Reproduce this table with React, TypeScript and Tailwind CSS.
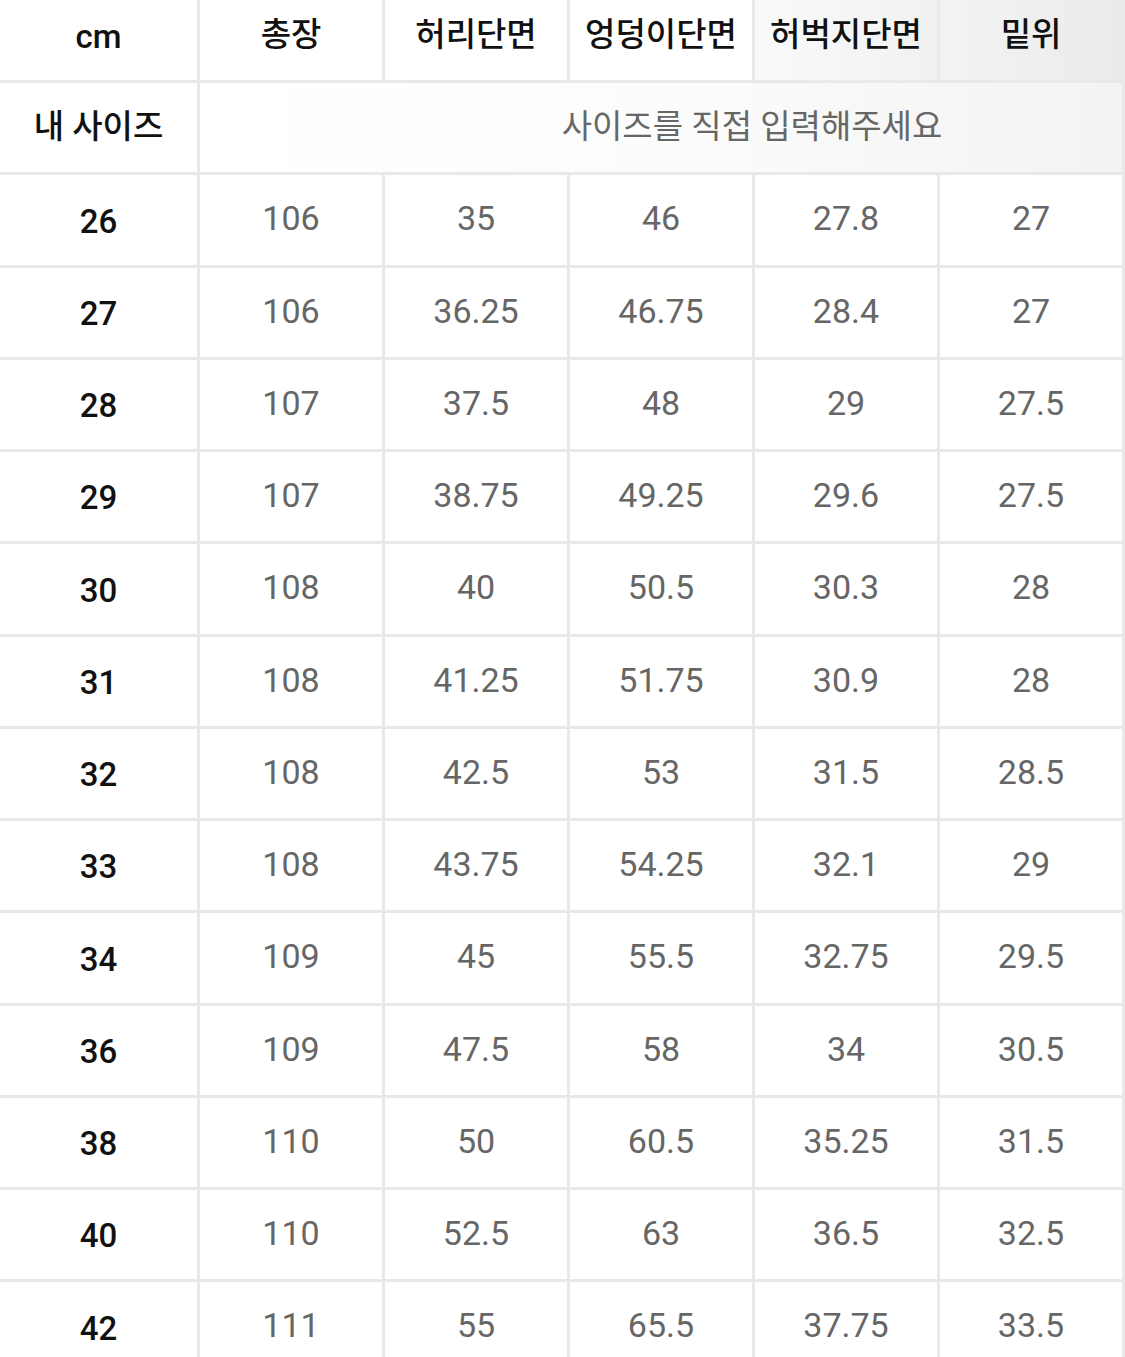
import React from "react";

const headers = ["총장", "허리단면", "엉덩이단면", "허벅지단면", "밑위"];
const rows: string[][] = [
  ["26", "106", "35", "46", "27.8", "27"],
  ["27", "106", "36.25", "46.75", "28.4", "27"],
  ["28", "107", "37.5", "48", "29", "27.5"],
  ["29", "107", "38.75", "49.25", "29.6", "27.5"],
  ["30", "108", "40", "50.5", "30.3", "28"],
  ["31", "108", "41.25", "51.75", "30.9", "28"],
  ["32", "108", "42.5", "53", "31.5", "28.5"],
  ["33", "108", "43.75", "54.25", "32.1", "29"],
  ["34", "109", "45", "55.5", "32.75", "29.5"],
  ["36", "109", "47.5", "58", "34", "30.5"],
  ["38", "110", "50", "60.5", "35.25", "31.5"],
  ["40", "110", "52.5", "63", "36.5", "32.5"],
  ["42", "111", "55", "65.5", "37.75", "33.5"],
];

const kr = "font-['Roboto','Noto_Sans_CJK_KR',sans-serif]";

export default function App() {
  const headerBg = [
    "bg-white",
    "bg-white",
    "bg-white",
    "bg-gradient-to-r from-[#fafafa] to-[#f1f1f1]",
    "bg-gradient-to-r from-[#f3f3f3] to-[#ebebeb]",
  ];
  return (
    <div className="w-[1125px] h-[1357px] overflow-hidden bg-white">
      <div className="grid grid-cols-[197px_repeat(5,1fr)] auto-rows-[89.25px] grid-rows-[80px] gap-[3px] pr-[3px] bg-[#e9e9e9]">
        <div className={`bg-white flex items-center justify-center text-[33px] font-medium text-[#111] ${kr}`}>
          <span className="-mt-[6px]">cm</span>
        </div>
        {headers.map((h, i) => (
          <div
            key={h}
            className={`${headerBg[i]} flex items-center justify-center text-[33px] font-medium text-[#111] ${kr}`}
          >
            <span className="-mt-[10px]">{h}</span>
          </div>
        ))}
        <div className={`bg-white flex items-center justify-center text-[33px] font-medium text-[#111] ${kr}`}>
          <span className="-mt-[2px]">내 사이즈</span>
        </div>
        <div
          className={`col-span-5 bg-gradient-to-r from-white via-[#fcfcfc] to-[#f3f3f3] flex items-center justify-center pl-[182px] text-[33px] text-[#666] ${kr}`}
        >
          <span className="-mt-[2px]">사이즈를 직접 입력해주세요</span>
        </div>
        {rows.map((r) => (
          <React.Fragment key={r[0]}>
            <div className="bg-white flex items-center justify-center text-[33px] font-medium text-[#111] font-['Roboto',sans-serif]">
              <span className="mt-[3px]">{r[0]}</span>
            </div>
            {r.slice(1).map((v, j) => (
              <div
                key={j}
                className="bg-white flex items-center justify-center text-[34px] text-[#666] font-['Roboto',sans-serif]"
              >
                <span className="-mt-[2px]">{v}</span>
              </div>
            ))}
          </React.Fragment>
        ))}
      </div>
    </div>
  );
}
